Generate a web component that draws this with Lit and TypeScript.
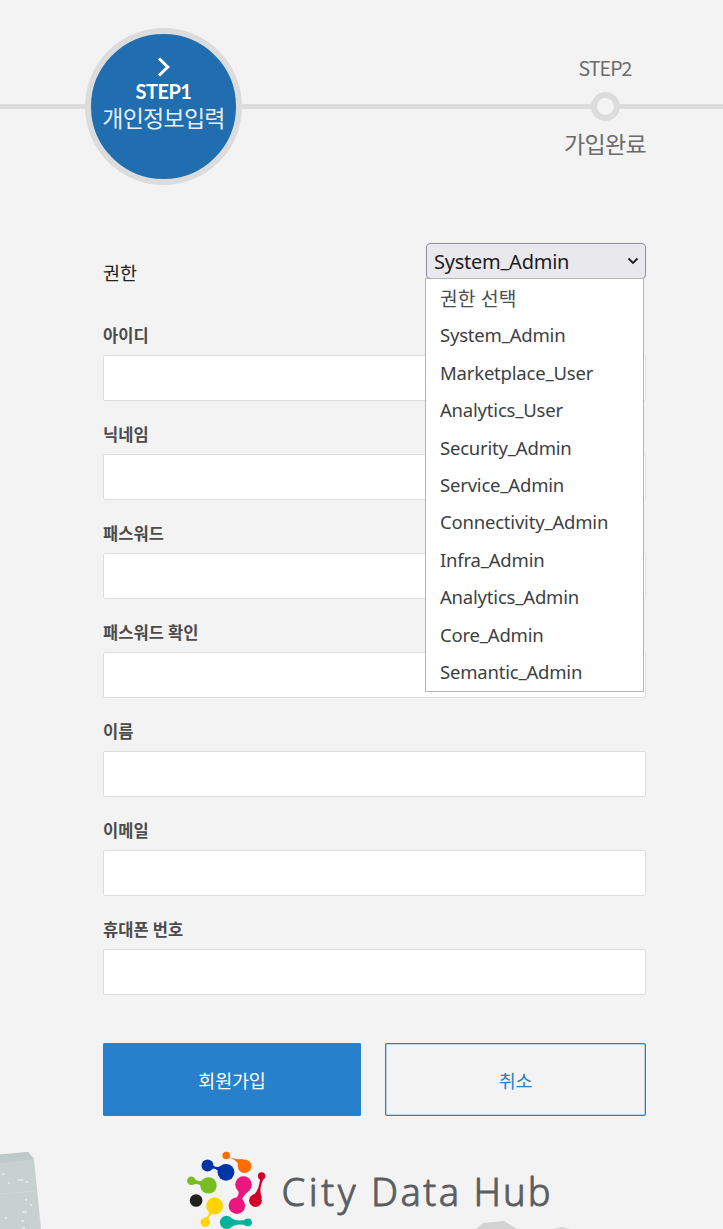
import { LitElement, html, svg, css } from "lit";
import { customElement } from "lit/decorators.js";

@customElement("step-bar")
class StepBar extends LitElement {
  static styles = css`
    :host { display: block; height: 188px; }
    .bar { display: grid; grid-template-columns: 327px 1fr; height: 188px;
      background: linear-gradient(#dcdcdc, #dcdcdc) 0 104px / 100% 5px no-repeat; }
    .cell { display: flex; flex-direction: column; align-items: center; }
    .circle { box-sizing: border-box; width: 157px; height: 157px; margin-top: 28px; border: 6px solid #dcdcdc;
      border-radius: 50%; background: #206db0; color: #fff; display: flex; flex-direction: column; align-items: center; }
    .arrow { display: block; width: 14px; height: 22px; margin-top: 22px; }
    .on { font-family: Lato, sans-serif; font-weight: 700; font-size: 20px; line-height: 26px; letter-spacing: -0.5px; }
    .name { font-size: 23px; line-height: 28px; margin-top: -1px; letter-spacing: -0.75px; font-weight: 400; color: #e6eff7; white-space: nowrap; }
    .next { color: #6b6b6b; padding-left: 160px; }
    .off { font-size: 19.5px; line-height: 26px; margin-top: 55px; letter-spacing: -0.9px; }
    .dot { box-sizing: border-box; width: 29px; height: 29px; margin: 11px 0 7px; border: 6px solid #dcdcdc; border-radius: 50%; background: #f3f3f3; }
    .off-name { font-size: 23px; line-height: 30px; letter-spacing: -0.7px; white-space: nowrap; }
  `;
  render() {
    return html`<div class="bar">
      <div class="cell"><div class="circle">
        <svg class="arrow" viewBox="0 0 14 22"><path d="M2 2.500l8.800 8.500L2 19.500" fill="none" stroke="#fff" stroke-width="3"/></svg>
        <span class="on">STEP1</span><span class="name">개인정보입력</span>
      </div></div>
      <div class="cell next"><span class="off">STEP2</span><span class="dot"></span><span class="off-name">가입완료</span></div>
    </div>`;
  }
}

@customElement("role-select")
class RoleSelect extends LitElement {
  static styles = css`
    :host { display: block; position: relative; width: 220px; font-family: "Noto Sans", "Noto Sans CJK KR", sans-serif; }
    .box { box-sizing: border-box; height: 36px; border: 1px solid #8f8f9d; border-radius: 4px; background: #e9e9ed; color: #1c1c22;
      display: flex; align-items: center; justify-content: space-between; padding: 0 6px 0 7px; font-size: 20px; letter-spacing: -0.25px; }
    .chev { width: 12px; height: 8px; }
    .menu { position: absolute; left: -1px; top: 35px; box-sizing: border-box; width: 219px; height: 414px; margin: 0; padding: 0;
      list-style: none; background: #fff; border: 1px solid #b4b4b4; z-index: 2; }
    .item { height: 37.4px; line-height: 37px; padding-left: 14px; font-size: 18.5px; letter-spacing: -0.2px; color: #3c4043; white-space: nowrap; }
    .item:first-child { font-size: 19.2px; letter-spacing: 0.2px; line-height: 39px; color: #4a4e51; }
    .u { vertical-align: 2px; line-height: 1; }
  `;
  render() {
    const roles = ["System_Admin", "Marketplace_User", "Analytics_User", "Security_Admin", "Service_Admin",
      "Connectivity_Admin", "Infra_Admin", "Analytics_Admin", "Core_Admin", "Semantic_Admin"];
    const name = (r: string) => { const [a, b] = r.split("_"); return html`${a}<span class="u">_</span>${b}`; };
    return html`<div class="box"><span>${name(roles[0])}</span>
      <svg class="chev" viewBox="0 0 12 8"><path d="M1.500 1.500L6 6l4.500-4.500" fill="none" stroke="#1c1c22" stroke-width="1.800"/></svg></div>
      <ul class="menu"><li class="item">권한 선택</li>${roles.map((r) => html`<li class="item">${name(r)}</li>`)}</ul>`;
  }
}

@customElement("page-footer")
class PageFooter extends LitElement {
  static styles = css`
    :host { display: block; }
    .art { display: block; width: 100%; height: 89px; }
    .brand { font-family: "Noto Sans", sans-serif; font-weight: 300; font-size: 38px; fill: #5b5d62; stroke: #5b5d62; stroke-width: .9px; stroke-linejoin: round; }
  `;
  render() {
    const specks = [[2, 1173, 3], [8, 1182, 2], [18, 1179, 5], [26, 1181, 2], [25, 1199, 2], [30, 1204, 2], [22, 1211, 5], [5, 1217, 2], [21, 1220, 3], [22, 1227, 3]];
    const words: [string, number, number][] = [["City", 281.5, 74], ["Data", 371, 88], ["Hub", 473.5, 77]];
    return html`<svg class="art" viewBox="0 1140 723 89">
      <path d="M0 1154.500L28 1152l6 7 7 70H0z" fill="#c9d0d0"/>
      <path d="M0 1154.500L28 1152l6 7-34 4z" fill="#c0c9c9"/>
      <path d="M0 1194l37-3" stroke="#d0d6d6" fill="none"/>
      ${specks.map(([x, y, w]) => svg`<rect x=${x} y=${y} width=${w} height="2" fill="#e1e6e5"/>`)}
      <path d="M476 1229l7-6 21-2 13 8z" fill="#d2d2d2"/><path d="M553 1229l9-2 8 2z" fill="#d5d5d5"/>
      <path d="M226 1154.500Q231 1160 243 1159L240 1167Q236 1158 226 1157z" fill="#ff6d00"/>
      <circle cx="226.200" cy="1155.500" r="3.800" fill="#ff6d00"/><circle cx="244.600" cy="1166.200" r="6.800" fill="#ff6d00"/>
      <path d="M208 1162Q217 1171 226 1164L221 1176Q217 1165 207 1170z" fill="#0033a6"/>
      <circle cx="207.500" cy="1165.500" r="6" fill="#0033a6"/><circle cx="226" cy="1172.300" r="8.400" fill="#0033a6"/>
      <path d="M193 1178Q199 1184 206 1179v13Q200 1181 192 1185z" fill="#78be20"/>
      <circle cx="191.300" cy="1180.800" r="4.200" fill="#78be20"/><circle cx="208.500" cy="1185.400" r="8.200" fill="#78be20"/>
      <path d="M237 1189Q241 1194 235 1199l8 6Q239 1198 250 1190z" fill="#ec167f"/>
      <circle cx="243.500" cy="1184.500" r="8.300" fill="#ec167f"/><circle cx="236.900" cy="1205.700" r="8.300" fill="#ec167f"/>
      <path d="M260 1177Q260 1190 252 1197l10 1Q258 1189 264 1178z" fill="#d0022b"/>
      <circle cx="261.600" cy="1175.900" r="3.700" fill="#d0022b"/><circle cx="255.500" cy="1200.500" r="6.400" fill="#d0022b"/>
      <circle cx="196.100" cy="1200.500" r="6.300" fill="#202020"/>
      <path d="M207 1209Q213 1214 202 1220l6 4Q207 1213 218 1213z" fill="#ffd400"/>
      <circle cx="214.600" cy="1206" r="8.400" fill="#ffd400"/><circle cx="205.200" cy="1222.300" r="4.600" fill="#ffd400"/>
      <path d="M230 1217Q237 1223 247 1219v7Q237 1222 229 1229z" fill="#00b39b"/>
      <circle cx="226.500" cy="1222.300" r="6.600" fill="#00b39b"/><circle cx="248" cy="1222.300" r="3.900" fill="#00b39b"/>
      ${words.map(([t, x, w]) => svg`<text class="brand" x=${x} y="1205.500" textLength=${w}>${t}</text>`)}
    </svg>`;
  }
}

@customElement("app-root")
class AppRoot extends LitElement {
  static styles = css`
    :host { display: block; width: 100%; height: 1229px; overflow: hidden; background: #f3f3f3;
      font-family: "Noto Sans CJK KR", "Noto Sans", sans-serif; }
    .form { display: flex; flex-direction: column; padding: 55px 77px 0 103px; }
    .role { display: flex; justify-content: space-between; height: 80px; }
    .role-label { font-size: 18.5px; line-height: 28px; margin-top: 15px; color: #222; }
    .field { display: flex; flex-direction: column; height: 99px; }
    .label { height: 32px; line-height: 24px; font-size: 16.5px; font-weight: 700; color: #4b4b4b; letter-spacing: 0.1px; }
    .input { box-sizing: border-box; width: 100%; height: 46px; border: 1px solid #dedede; border-radius: 2px; background: #fff; padding: 0 12px; outline: 0; }
    .actions { display: grid; grid-template-columns: 258px 261px; justify-content: space-between; margin-top: 27px; height: 97px; }
    .btn { box-sizing: border-box; height: 73px; appearance: none; border: 0; box-shadow: inset 0 0 0 1.3px #2680cc; border-radius: 2px; background: #f3f3f3; color: #2680cc;
      font-family: inherit; font-size: 18.5px; font-weight: 400; letter-spacing: -0.2px; padding: 1px 0 0; }
    .primary { background: #2680cc; color: #fff; }
  `;
  render() {
    const fields = ["아이디", "닉네임", "패스워드", "패스워드 확인", "이름", "이메일", "휴대폰 번호"];
    return html`<step-bar></step-bar>
      <div class="form">
        <div class="role"><span class="role-label">권한</span><role-select></role-select></div>
        ${fields.map((f) => html`<label class="field"><span class="label">${f}</span><input class="input"></label>`)}
        <div class="actions"><button class="btn primary">회원가입</button><button class="btn">취소</button></div>
      </div>
      <page-footer></page-footer>`;
  }
}
